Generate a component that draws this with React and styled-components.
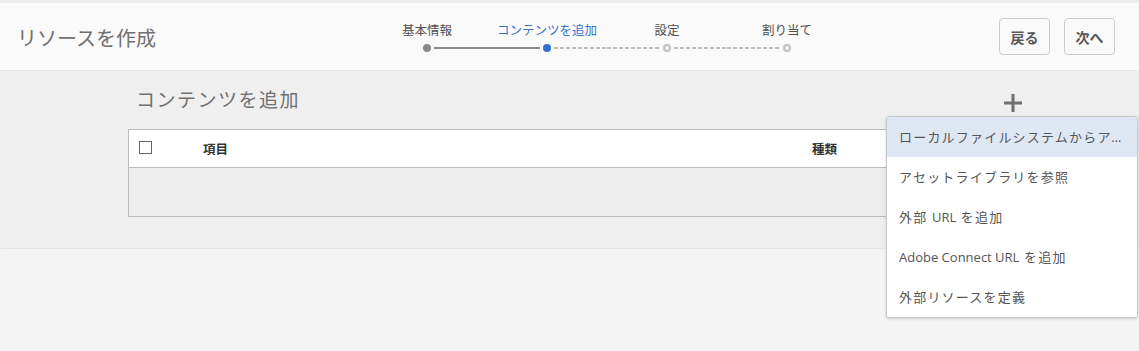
import styled, { createGlobalStyle } from 'styled-components'

const GlobalStyle = createGlobalStyle`
  html, body {
    margin: 0;
    padding: 0;
    background: #f4f4f4;
    font-family: "Open Sans", "Noto Sans CJK JP", sans-serif;
  }
`

const steps = [
  { label: '基本情報', state: 'done' },
  { label: 'コンテンツを追加', state: 'current' },
  { label: '設定', state: 'todo' },
  { label: '割り当て', state: 'todo' },
]

function App() {
  const menuItems = [
    'ローカルファイルシステムからアセットを追加',
    'アセットライブラリを参照',
    <>外部 <Latin>URL</Latin> を追加</>,
    <><Latin>Adobe Connect URL</Latin> を追加</>,
    '外部リソースを定義',
  ]

  return (
    <Page>
      <GlobalStyle />
      <TopStrip />
      <Header>
        <Title>リソースを作成</Title>
        <Stepper>
          {steps.map((s, i) => (
            <Step key={i}>
              <StepLabel $current={s.state === 'current'}>{s.label}</StepLabel>
              <Track>
                <Line $hidden={i === 0} $dashed={s.state === 'todo'} />
                <Dot $state={s.state} />
                <Line $hidden={i === steps.length - 1} $dashed={s.state !== 'done'} />
              </Track>
            </Step>
          ))}
        </Stepper>
        <Actions>
          <Button>戻る</Button>
          <Button>次へ</Button>
        </Actions>
      </Header>

      <Panel>
        <Content>
          <HeadingRow>
            <Heading>コンテンツを追加</Heading>
            <AddButton>
              <svg width="18" height="18" viewBox="0 0 18 18">
                <path d="M9 0v18M0 9h18" stroke="#707070" strokeWidth="3" />
              </svg>
            </AddButton>
          </HeadingRow>
          <Table>
            <HeadRow>
              <CheckCell><Checkbox /></CheckCell>
              <NameCell>項目</NameCell>
              <TypeCell>種類</TypeCell>
            </HeadRow>
            <EmptyRow />
          </Table>
          <Menu>
            {menuItems.map((m, i) => (
              <MenuItem key={i} $active={i === 0}>{m}</MenuItem>
            ))}
          </Menu>
        </Content>
      </Panel>
    </Page>
  )
}

const Page = styled.div`
  width: 1139px;
  height: 351px;
  background: #f4f4f4;
  overflow: hidden;
`

const TopStrip = styled.div`
  height: 3px;
  background: #eeeeee;
`

const Header = styled.header`
  height: 68px;
  display: grid;
  grid-template-columns: 367px 480px 1fr;
  align-items: center;
  background: #fafafa;
  border-bottom: 1px solid #e6e6e6;
  box-sizing: border-box;
`

const Title = styled.h1`
  margin: 0;
  padding-left: 17px;
  font-size: 20px;
  font-weight: 400;
  color: #707070;
  font-family: "Noto Sans CJK JP", sans-serif;
  padding-top: 2px;
`

const Stepper = styled.div`
  display: flex;
  align-self: start;
  padding-top: 18px;
`

const Step = styled.div`
  width: 120px;
  display: flex;
  flex-direction: column;
  align-items: center;
`

const StepLabel = styled.span`
  font-family: "Noto Sans CJK JP", sans-serif;
  font-size: 12.5px;
  line-height: 18px;
  color: ${(p) => (p.$current ? '#3b73c8' : '#505050')};
  white-space: nowrap;
`

const Track = styled.div`
  width: 100%;
  display: flex;
  align-items: center;
  margin-top: 4px;
  height: 10px;
`

const Line = styled.div`
  flex: 1;
  height: 2px;
  visibility: ${(p) => (p.$hidden ? 'hidden' : 'visible')};
  background: ${(p) =>
    p.$dashed
      ? 'repeating-linear-gradient(to right, #bdbdbd 0 4px, transparent 4px 6px)'
      : '#8a8a8a'};
`

const Dot = styled.div`
  width: 8px;
  height: 8px;
  margin: 0 3px;
  border-radius: 50%;
  box-sizing: border-box;
  background: ${(p) =>
    p.$state === 'done' ? '#8a8a8a' : p.$state === 'current' ? '#2e6fcf' : '#ffffff'};
  border: ${(p) => (p.$state === 'todo' ? '2px solid #bdbdbd' : 'none')};
`

const Actions = styled.div`
  display: flex;
  justify-content: flex-end;
  gap: 14px;
  padding-right: 24px;
`

const Button = styled.button`
  width: 51px;
  height: 37px;
  padding: 0;
  border: 1px solid #cccccc;
  border-radius: 4px;
  background: #fafafa;
  color: #555555;
  font-family: "Noto Sans CJK JP", sans-serif;
  font-size: 14px;
  font-weight: 700;
`

const Panel = styled.section`
  height: 178px;
  box-sizing: border-box;
  background: #efefef;
  border-bottom: 1px solid #e6e6e6;
  border-radius: 0 0 3px 3px;
  padding: 12px 0 0 128px;
`

const Content = styled.div`
  position: relative;
  width: 894px;
`

const HeadingRow = styled.div`
  height: 30px;
  display: flex;
  align-items: center;
  justify-content: space-between;
  margin-bottom: 16px;
`

const Heading = styled.h2`
  margin: 0;
  padding-left: 8px;
  font-family: "Noto Sans CJK JP", sans-serif;
  font-size: 19px;
  letter-spacing: 1.5px;
  font-weight: 400;
  color: #707070;
`

const AddButton = styled.div`
  width: 18px;
  height: 18px;
  margin-top: 10px;
  display: flex;
`

const Table = styled.div`
  width: 883px;
  border: 1px solid #bcbcbc;
  box-sizing: border-box;
`

const HeadRow = styled.div`
  height: 37px;
  display: flex;
  align-items: center;
  background: #ffffff;
  border-bottom: 1px solid #bcbcbc;
  font-family: "Noto Sans CJK JP", sans-serif;
  font-size: 12.5px;
  font-weight: 700;
  color: #333333;
`

const CheckCell = styled.div`
  width: 64px;
  padding-left: 10px;
  display: flex;
  align-items: center;
  margin-top: -3px;
`

const Checkbox = styled.span`
  width: 13px;
  height: 13px;
  box-sizing: border-box;
  border: 1px solid #666666;
  background: #ffffff;
`

const NameCell = styled.div`
  flex: 1;
`

const TypeCell = styled.div`
  width: 198px;
`

const EmptyRow = styled.div`
  height: 48px;
  background: #ededed;
`

const Menu = styled.ul`
  position: absolute;
  top: 33px;
  left: 758px;
  width: 252px;
  margin: 0;
  padding: 0;
  list-style: none;
  background: #ffffff;
  border: 1px solid #c8c8c8;
  border-radius: 3px;
  box-shadow: 0 1px 3px rgba(0, 0, 0, 0.15);
  box-sizing: border-box;
  overflow: hidden;
`

const MenuItem = styled.li`
  height: 40px;
  line-height: 40px;
  padding: 0 12px;
  font-family: "Open Sans", "Noto Sans CJK JP", sans-serif;
  font-size: 13px;
  letter-spacing: 1.2px;
  color: #555555;
  background: ${(p) => (p.$active ? '#dfe7f5' : '#ffffff')};
  white-space: nowrap;
  overflow: hidden;
  text-overflow: ellipsis;
`

const Latin = styled.span`
  letter-spacing: 0;
`

export default App
